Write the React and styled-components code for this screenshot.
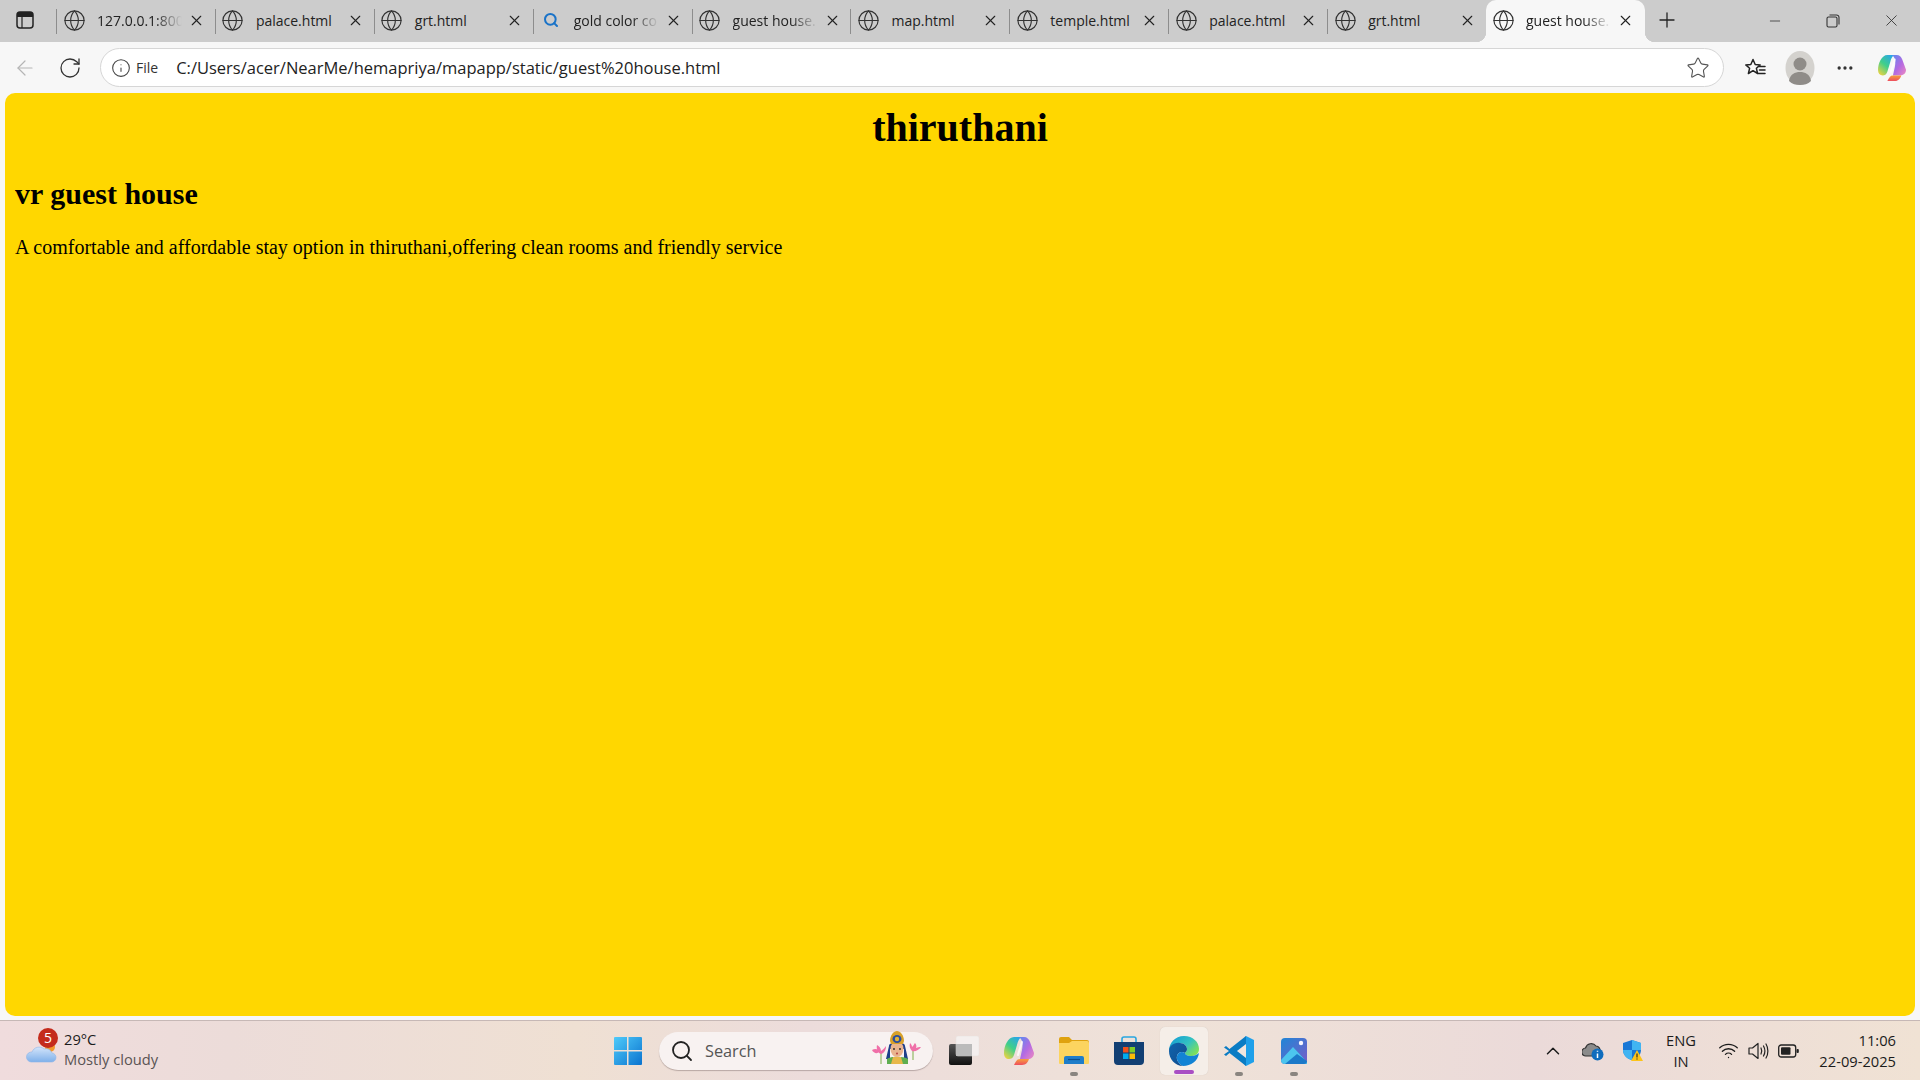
import React from "react";
import styled, { createGlobalStyle } from "styled-components";
import { Globe, X, Plus, Minus, RotateCw, ArrowLeft, Info, Star, MoreHorizontal, ChevronUp, Search, Wifi } from "lucide-react";

const Global = createGlobalStyle`
  html, body { margin: 0; padding: 0; background: #f7f7f7; }
  * { box-sizing: border-box; }
`;

const Screen = styled.div`
  width: 1920px;
  height: 1080px;
  display: flex;
  flex-direction: column;
  overflow: hidden;
  background: #f7f7f7;
  font-family: "Open Sans", "Noto Sans", sans-serif;
  color: #1b1b1b;
`;

const TabStrip = styled.div`
  height: 42px;
  flex: none;
  display: flex;
  background: #cccccc;
`;
const SideButton = styled.div`
  width: 56px;
  display: flex;
  align-items: center;
  padding: 0 0 2px 16px;
`;
const Tab = styled.div`
  position: relative;
  width: 158.9px;
  flex: none;
  display: flex;
  align-items: center;
  padding: 0 0 2px ${p => (p.$active ? "5.5px" : "6.5px")};
  background: ${p => (p.$active ? "#f7f7f7" : "transparent")};
  border-radius: ${p => (p.$active ? "10px 10px 0 0" : "0")};

  ${p =>
    !p.$active
      ? `&::before {
    content: "";
    position: absolute;
    left: 0;
    top: 9px;
    height: 25px;
    width: 1px;
    background: #8d8d8d;
  }`
      : ""}
  ${p =>
    p.$active
      ? `&::before, &::after {
    content: "";
    position: absolute;
    bottom: 0;
    width: 10px;
    height: 10px;
  }
  &::before {
    left: -10px;
    background: radial-gradient(circle at 0 0, transparent 10px, #f7f7f7 10.5px);
  }
  &::after {
    right: -10px;
    background: radial-gradient(circle at 100% 0, transparent 10px, #f7f7f7 10.5px);
  }`
      : ""}
`;
const TabIcon = styled.span`
  width: 23px;
  display: flex;
  justify-content: center;
`;
const TabLabel = styled.span`
  margin-left: 11.5px;
  width: 85px;
  font-size: 14px;
  white-space: nowrap;
  color: #222;
  ${p =>
    p.$fade
      ? `-webkit-mask-image: linear-gradient(90deg, #000 68%, transparent 100%);
  mask-image: linear-gradient(90deg, #000 68%, transparent 100%);`
      : ""}
`;
const TabClose = styled.span`
  margin-left: 6px;
  display: flex;
  color: #222;
`;
const NewTab = styled.div`
  margin-left: 10px;
  width: 24px;
  display: flex;
  align-items: center;
  justify-content: center;
  padding-bottom: 2px;
`;
const WindowButtons = styled.div`
  margin-left: auto;
  display: flex;
  align-items: center;
  padding-bottom: 1px;
`;
const WindowButton = styled.div`
  width: 58px;
  display: flex;
  justify-content: center;
  color: #333;
`;

const Toolbar = styled.div`
  height: 51px;
  flex: none;
  display: flex;
  align-items: center;
  background: #f7f7f7;
`;
const NavButton = styled.div`
  width: ${p => p.$w}px;
  flex: none;
  display: flex;
  justify-content: center;
  color: ${p => (p.$dim ? "#b5b5b5" : "#333")};
`;
const AddressBar = styled.div`
  width: 1624px;
  height: 39px;
  flex: none;
  margin-left: 10px;
  display: flex;
  align-items: center;
  padding: 0 13px 0 10px;
  background: #fff;
  border: 1.5px solid #d6d6d6;
  border-radius: 20px;
`;
const FileTag = styled.span`
  margin-left: 5px;
  font-size: 14px;
  color: #333;
`;
const Url = styled.span`
  margin-left: 18px;
  font-size: 16.5px;
  color: #222;
  white-space: nowrap;
`;
const BarStar = styled.span`
  margin-left: auto;
  display: flex;
  color: #555;
`;
const ToolIcons = styled.div`
  flex: none;
  display: flex;
  align-items: center;
  padding-left: 17px;
`;
const ToolSlot = styled.div`
  width: ${p => p.$w}px;
  flex: none;
  display: flex;
  justify-content: center;
  color: #333;
`;

const Page = styled.main`
  flex: 1;
  margin: 0 5px 4px;
  padding: 12px 10px 10px;
  background: #ffd700;
  border-radius: 10px;
  font-family: "Liberation Serif", "Times New Roman", serif;
  color: #000;
`;
const Title = styled.h1`
  margin: 0;
  font-size: 40px;
  line-height: 46px;
  text-align: center;
`;
const Name = styled.h2`
  margin: 26px 0 25px;
  font-size: 30px;
  line-height: 34px;
`;
const Text = styled.p`
  margin: 0;
  font-size: 20px;
  line-height: 23px;
`;

const Taskbar = styled.footer`
  height: 60px;
  flex: none;
  display: flex;
  align-items: center;
  border-top: 1px solid #c6b8b6;
  background: linear-gradient(90deg, #f0dcdd 0%, #ecdcd9 12%, #efe0d3 30%, #ecdcdb 42%, #efe2d8 62%, #ebdad9 80%, #f0e2d4 100%);
`;
const Weather = styled.div`
  position: relative;
  width: 604px;
  flex: none;
  display: flex;
  align-items: center;
  padding: 0 0 3px 25px;
`;
const Badge = styled.span`
  position: absolute;
  left: 38px;
  top: -1px;
  width: 20px;
  height: 20px;
  border-radius: 50%;
  background: #c42b1c;
  color: #fff;
  font-size: 14px;
  line-height: 20px;
  text-align: center;
`;
const WeatherText = styled.div`
  margin-left: 7px;
  display: flex;
  flex-direction: column;
  font-size: 14.7px;
  line-height: 20px;
  color: #1b1b1b;
`;
const Muted = styled.span`
  color: #5a5454;
`;
const AppSlot = styled.div`
  position: relative;
  width: 48px;
  height: 48px;
  flex: none;
  display: flex;
  align-items: center;
  justify-content: center;
  border-radius: 5px;
  background: ${p => (p.$active ? "#f5eee8" : "transparent")};
  box-shadow: ${p => (p.$active ? "0 0 1px rgba(0,0,0,.15)" : "none")};
`;
const Dot = styled.span`
  position: absolute;
  bottom: ${p => (p.$active ? "1px" : "-1px")};
  left: 50%;
  transform: translateX(-50%);
  width: ${p => (p.$active ? "20px" : "8px")};
  height: 4px;
  border-radius: 2px;
  background: ${p => (p.$active ? "#a94fc4" : "#8a8580")};
`;
const SearchBox = styled.div`
  width: 274px;
  height: 38px;
  margin: 0 7px;
  flex: none;
  display: flex;
  align-items: center;
  padding-left: 11px;
  border-radius: 19px;
  background: #f8f2f1;
  box-shadow: 0 1px 1px rgba(90, 70, 70, .35);
`;
const SearchText = styled.span`
  margin-left: 11px;
  font-size: 16.3px;
  color: #555;
`;
const Apps = styled.div`
  display: flex;
  gap: 7px;
`;
const Tray = styled.div`
  margin-left: auto;
  display: flex;
  align-items: center;
  padding-right: 24px;
`;
const TraySlot = styled.div`
  width: ${p => p.$w}px;
  display: flex;
  justify-content: center;
  color: #1b1b1b;
`;
const Lang = styled.div`
  width: 56px;
  margin-right: 4px;
  font-size: 14.7px;
  line-height: 21px;
  text-align: center;
`;
const Clock = styled.div`
  width: 93px;
  font-size: 14.7px;
  line-height: 21px;
  text-align: right;
`;
const Goddess = styled.svg`
  margin-left: auto;
  margin-right: 10px;
  margin-top: -5px;
  overflow: visible;
`;

const SidebarIcon = () => (
  <svg width="18" height="18" viewBox="0 0 18 18">
    <rect x="1" y="1" width="16" height="16" rx="3" fill="none" stroke="#222" strokeWidth="1.5" />
    <path d="M1 6V4a3 3 0 0 1 3-3h10a3 3 0 0 1 3 3v2z" fill="#222" />
    <path d="M6 6v11" stroke="#222" strokeWidth="1.2" />
  </svg>
);

const RestoreIcon = () => (
  <svg width="14" height="14" viewBox="0 0 14 14" fill="none" stroke="#333" strokeWidth="1.1">
    <rect x="1" y="3" width="10" height="10" rx="1.5" />
    <path d="M3.5 1h7A2.5 2.5 0 0 1 13 3.500v7" />
  </svg>
);

const FavIcon = () => (
  <svg width="22" height="22" viewBox="0 0 22 22" fill="none" stroke="#222" strokeWidth="1.5" strokeLinejoin="round">
    <path d="M9 2.500l2.200 5 5 .4-3.800 3.400 1.200 5.200L9 13.700l-4.600 2.800 1.200-5.200L1.800 7.900l5-.4z" />
    <path d="M15 9.500h6M15.500 13h5.500M14 16.500h7" strokeLinecap="round" />
  </svg>
);

const Avatar = () => (
  <svg width="30" height="34" viewBox="0 0 30 34">
    <ellipse cx="15" cy="17" rx="14.500" ry="17" fill="#d4d2ce" />
    <circle cx="15" cy="13" r="6.500" fill="#8f8c88" />
    <path d="M4 30c1-7 6-9 11-9s10 2 11 9c-3 3-7 4-11 4s-8-1-11-4z" fill="#8f8c88" />
  </svg>
);

const CopilotIcon = ({ size = 30, id = "cp" }) => (
  <svg width={size} height={size} viewBox="0 0 30 30">
    <defs>
      <linearGradient id={`${id}a`} x1="0.8" y1="0" x2="0.1" y2="1">
        <stop offset="0" stopColor="#2aa5ea" />
        <stop offset=".5" stopColor="#3fcf8a" />
        <stop offset="1" stopColor="#f4d33f" />
      </linearGradient>
      <linearGradient id={`${id}b`} x1="0" y1="0" x2="1" y2="1">
        <stop offset="0" stopColor="#5a8cf0" />
        <stop offset=".55" stopColor="#b46ae2" />
        <stop offset="1" stopColor="#ee8ac0" />
      </linearGradient>
      <linearGradient id={`${id}c`} x1="0" y1="0" x2="0" y2="1">
        <stop offset="0" stopColor="#f6a03c" />
        <stop offset="1" stopColor="#ee4d5f" />
      </linearGradient>
    </defs>
    <path d="M10 1h8c-3 1-4 4-5 8l-3 10c-1 3-3 4-5 4-3 0-5-2-5-6C0 10 4 1 10 1z" fill={`url(#${id}a)`} />
    <path d="M15 1h5c3 0 5 2 6 5l4 11c0 4-3 6-6 6h-8l2-9c1-5 1-10-3-13z" fill={`url(#${id}b)`} />
    <path d="M10 29h8c4 0 6-3 7-6H16c-3 0-4 2-6 6z" fill={`url(#${id}c)`} />
    <path d="M18 6c-1 4-3 9-4 13" stroke="#fff" strokeOpacity=".75" strokeWidth="2.2" strokeLinecap="round" fill="none" />
  </svg>
);

const WeatherIcon = () => (
  <svg width="32" height="28" viewBox="0 0 32 28">
    <defs>
      <linearGradient id="cl" x1="0" y1="0" x2="0" y2="1">
        <stop offset="0" stopColor="#d3e4fa" />
        <stop offset="1" stopColor="#7fb0ea" />
      </linearGradient>
    </defs>
    <circle cx="25" cy="12" r="5" fill="#f29a2e" />
    <path d="M6 27H26a4.500 4.500 0 0 0 1-9 7 7 0 0 0-8-4 7.500 7.500 0 0 0-12 3 5 5 0 0 0-1 10z" fill="url(#cl)" stroke="#8eb6e8" strokeWidth=".6" />
  </svg>
);

const WindowsLogo = () => (
  <svg width="30" height="30" viewBox="0 0 30 30">
    <defs>
      <linearGradient id="win" x1="0" y1="0" x2="1" y2="1">
        <stop offset="0" stopColor="#4fcbfa" />
        <stop offset="1" stopColor="#0a73cf" />
      </linearGradient>
    </defs>
    <path d="M1 2a1 1 0 0 1 1-1h12v13H1zM15.500 1H28a1 1 0 0 1 1 1v12H15.500zM1 15.500h13V29H2a1 1 0 0 1-1-1zM15.500 15.500H29V28a1 1 0 0 1-1 1H15.500z" fill="url(#win)" />
  </svg>
);

const LadyIcon = () => (
  <Goddess width="52" height="34" viewBox="0 0 52 34">
    <path d="M10 20v13M42 16v13" stroke="#7fae4a" strokeWidth="1" />
    <g fill="#f06fa8">
      <path d="M1 19c3-2 6-1 8 1-2 3-6 3-8-1z" />
      <path d="M6 14c2 1 4 3 4 6 3-2 4-4 5-5 0 3-1 7-5 8-3-1-5-5-4-9z" />
      <path d="M39 12c1 1 2 2 2 4 2-2 2-3 3-4 1 1 2 3 1 5 2-1 3-1 5-1-2 3-6 5-9 4-2-2-3-5-2-8z" />
    </g>
    <path d="M18 15c0-5 16-5 16 0l3 13h-4V18H19v10h-4z" fill="#1d3f8a" />
    <path d="M16 28c3-3 17-3 21 0v5H16z" fill="#5fae50" />
    <path d="M22 26h8l2 7H20z" fill="#e8b84a" />
    <ellipse cx="26" cy="18" rx="6.500" ry="8" fill="#e9b48f" />
    <path d="M19 10c0-6 4-10 7-10s7 4 7 10l-1 3H20z" fill="#d9a129" />
    <ellipse cx="26" cy="8" rx="4.500" ry="4" fill="#2b4ea0" />
    <circle cx="26" cy="8" r="2.200" fill="#e2b33b" />
    <circle cx="23" cy="18" r=".9" fill="#222" />
    <circle cx="29" cy="18" r=".9" fill="#222" />
    <circle cx="26" cy="22.500" r="1" fill="#b8433f" />
  </Goddess>
);

const TaskViewIcon = () => (
  <svg width="30" height="30" viewBox="0 0 30 30">
    <defs>
      <linearGradient id="tv" x1="0" y1="0" x2="0" y2="1">
        <stop offset="0" stopColor="#555" />
        <stop offset="1" stopColor="#111" />
      </linearGradient>
    </defs>
    <rect x="0" y="8" width="23" height="21" rx="2" fill="url(#tv)" />
    <rect x="7" y="0" width="23" height="20" rx="2" fill="#f4f2f1" fillOpacity=".85" stroke="#e4e0de" strokeWidth=".5" />
    <rect x="7" y="8" width="16" height="12" fill="#bbb" />
  </svg>
);

const FolderIcon = () => (
  <svg width="30" height="28" viewBox="0 0 30 28">
    <path d="M0 2a2 2 0 0 1 2-2h8l3 3h15a2 2 0 0 1 2 2v4H0z" fill="#dfa20f" />
    <path d="M0 6h10l3-2h15a2 2 0 0 1 2 2v20a1 1 0 0 1-1 1H1a1 1 0 0 1-1-1z" fill="#fcd45f" />
    <path d="M5 21a2 2 0 0 1 2-2h16a2 2 0 0 1 2 2v6H5z" fill="#1f7dc9" />
    <path d="M9 22.500h12" stroke="#0c4f8c" strokeWidth="1.2" />
  </svg>
);

const StoreIcon = () => (
  <svg width="30" height="30" viewBox="0 0 30 30">
    <path d="M8 6V3a2 2 0 0 1 2-2h10a2 2 0 0 1 2 2v3" fill="none" stroke="#2aa6e0" strokeWidth="1.6" />
    <path d="M0 6h30v19a4 4 0 0 1-4 4H4a4 4 0 0 1-4-4z" fill="#123f73" />
    <rect x="9" y="11" width="5.500" height="5.500" fill="#f1511b" />
    <rect x="15.500" y="11" width="5.500" height="5.500" fill="#80cc28" />
    <rect x="9" y="17.500" width="5.500" height="5.500" fill="#00adef" />
    <rect x="15.500" y="17.500" width="5.500" height="5.500" fill="#fbbc09" />
  </svg>
);

const EdgeIcon = () => (
  <svg width="30" height="30" viewBox="0 0 30 30">
    <defs>
      <linearGradient id="ed1" x1="0" y1="0" x2="1" y2=".7">
        <stop offset="0" stopColor="#0f97d8" />
        <stop offset=".6" stopColor="#34c3c0" />
        <stop offset="1" stopColor="#7de05a" />
      </linearGradient>
      <linearGradient id="ed2" x1="0" y1="0" x2="1" y2="1">
        <stop offset="0" stopColor="#0f64ad" />
        <stop offset="1" stopColor="#114a8b" />
      </linearGradient>
    </defs>
    <path d="M15 0c9 0 15 6 15 13 0 5-4 7-8 7-3 0-6-1-6-3 0-1 2-1 2-4 0-3-3-6-7-6C6 7 2 11 0 15 0 7 6 0 15 0z" fill="url(#ed1)" />
    <path d="M0 15c0-5 5-9 11-8 4 0 7 3 7 6 0 3-2 3-2 4-3-2-7-1-8 3-1 4 2 8 6 10C6 30 0 23 0 15z" fill="url(#ed2)" />
    <path d="M14 30c-4-2-7-6-6-10 1-4 5-5 8-3 0 2 3 3 6 3 3 0 6-1 8-3-1 8-8 13-16 13z" fill="#1283d4" />
  </svg>
);

const VSCodeIcon = () => (
  <svg width="30" height="30" viewBox="0 0 30 30">
    <path d="M22 0l8 4v22l-8 4-13-12.500z" fill="#1fa0ea" />
    <path d="M22 0v9L13 15l9 6v9L5.500 17 2 20 0 18.500 5 15 0 11.500 2 10l3.500 3z" fill="#0a7cc4" />
    <path d="M22 8v14l-9-7z" fill="#f1e6df" />
  </svg>
);

const PhotosIcon = () => (
  <svg width="26" height="26" viewBox="0 0 26 26">
    <defs>
      <linearGradient id="ph" x1="0" y1="0" x2="1" y2="1">
        <stop offset="0" stopColor="#1f86d6" />
        <stop offset="1" stopColor="#7a5cc8" />
      </linearGradient>
    </defs>
    <rect width="26" height="26" rx="4" fill="url(#ph)" />
    <circle cx="20" cy="5" r="2.200" fill="#f5f5ff" />
    <path d="M0 22l12-13 14 15v-1 3H4a4 4 0 0 1-4-4z" fill="#4cc5ee" />
    <path d="M4 26l12-10 10 7a3 3 0 0 1-3 3z" fill="#1c79c9" />
  </svg>
);

const OneDriveIcon = () => (
  <svg width="22" height="20" viewBox="0 0 22 20">
    <path d="M4 15a4 4 0 0 1-.5-8A6 6 0 0 1 14 5a4.500 4.500 0 0 1 4 5.500V15z" fill="#8b8b8b" stroke="#333" strokeWidth="1.2" />
    <circle cx="15.500" cy="13.500" r="6" fill="#0f6cbd" />
    <path d="M15.500 12.500v4.500M15.500 9.800v1" stroke="#fff" strokeWidth="1.5" />
  </svg>
);

const ShieldIcon = () => (
  <svg width="20" height="21" viewBox="0 0 20 21">
    <path d="M9 0l9 3v7c0 5-4 9-9 10-5-1-9-5-9-10V3z" fill="#1877d6" />
    <path d="M9 0l9 3v7H9zM0 10h9v10c-5-1-9-5-9-10z" fill="#41b4f2" />
    <path d="M14 10l6 11H8z" fill="#fcc419" />
    <path d="M14 13.500v4M14 18.500v1" stroke="#222" strokeWidth="1.1" />
  </svg>
);

const VolumeIcon = () => (
  <svg width="21" height="18" viewBox="0 0 21 18" fill="none" stroke="#222" strokeWidth="1.2" strokeLinejoin="round">
    <path d="M1 6h3.500L10 1.500v15L4.500 12H1z" />
    <path d="M13 6c1 2 1 4 0 6M15.500 4c1.700 3 1.700 7 0 10M18 2c2.500 4 2.500 10 0 14" strokeLinecap="round" />
  </svg>
);

const BatteryIcon = () => (
  <svg width="21" height="14" viewBox="0 0 21 14">
    <rect x=".7" y="1" width="17" height="12" rx="2.500" fill="none" stroke="#222" strokeWidth="1.3" />
    <rect x="3" y="3.200" width="9.500" height="7.600" rx="1" fill="#222" />
    <rect x="18.500" y="5" width="2.300" height="4" rx="1" fill="#222" />
  </svg>
);

const tabs = [
  { label: "127.0.0.1:800", fade: true },
  { label: "palace.html" },
  { label: "grt.html" },
  { label: "gold color co", fade: true, search: true },
  { label: "guest house.", fade: true },
  { label: "map.html" },
  { label: "temple.html" },
  { label: "palace.html" },
  { label: "grt.html" },
  { label: "guest house.", fade: true, active: true }
];

const apps = [
  { icon: <TaskViewIcon /> },
  { icon: <CopilotIcon id="bar" /> },
  { icon: <FolderIcon />, dot: true },
  { icon: <StoreIcon /> },
  { icon: <EdgeIcon />, active: true, dot: true },
  { icon: <VSCodeIcon />, dot: true },
  { icon: <PhotosIcon />, dot: true }
];

const App = () => (
  <Screen>
    <Global />
    <TabStrip>
      <SideButton>
        <SidebarIcon />
      </SideButton>
      {tabs.map((t, i) => (
        <Tab key={i} $active={t.active}>
          <TabIcon>
            {t.search ? (
              <Search size={16} color="#1a73c8" strokeWidth={3} />
            ) : (
              <Globe size={23} color="#333" strokeWidth={1.2} />
            )}
          </TabIcon>
          <TabLabel $fade={t.fade}>{t.label}</TabLabel>
          <TabClose>
            <X size={17} strokeWidth={1.6} />
          </TabClose>
        </Tab>
      ))}
      <NewTab>
        <Plus size={24} strokeWidth={1.3} color="#222" />
      </NewTab>
      <WindowButtons>
        <WindowButton>
          <Minus size={16} strokeWidth={1.2} />
        </WindowButton>
        <WindowButton>
          <RestoreIcon />
        </WindowButton>
        <WindowButton>
          <X size={19} strokeWidth={1.1} />
        </WindowButton>
      </WindowButtons>
    </TabStrip>

    <Toolbar>
      <NavButton $w={50} $dim>
        <ArrowLeft size={24} strokeWidth={1.2} />
      </NavButton>
      <NavButton $w={40}>
        <RotateCw size={24} strokeWidth={1.3} />
      </NavButton>
      <AddressBar>
        <Info size={20} strokeWidth={1.3} color="#444" />
        <FileTag>File</FileTag>
        <Url>C:/Users/acer/NearMe/hemapriya/mapapp/static/guest%20house.html</Url>
        <BarStar>
          <Star size={24} strokeWidth={1.1} />
        </BarStar>
      </AddressBar>
      <ToolIcons>
        <ToolSlot $w={28}>
          <FavIcon />
        </ToolSlot>
        <ToolSlot $w={62}>
          <Avatar />
        </ToolSlot>
        <ToolSlot $w={28}>
          <MoreHorizontal size={20} strokeWidth={2} />
        </ToolSlot>
        <ToolSlot $w={66}>
          <CopilotIcon size={28} id="top" />
        </ToolSlot>
      </ToolIcons>
    </Toolbar>

    <Page>
      <Title>thiruthani</Title>
      <Name>vr guest house</Name>
      <Text>A comfortable and affordable stay option in thiruthani,offering clean rooms and friendly service</Text>
    </Page>

    <Taskbar>
      <Weather>
        <WeatherIcon />
        <Badge>5</Badge>
        <WeatherText>
          <span>29°C</span>
          <Muted>Mostly cloudy</Muted>
        </WeatherText>
      </Weather>
      <AppSlot>
        <WindowsLogo />
      </AppSlot>
      <SearchBox>
        <Search size={24} strokeWidth={1.8} color="#222" />
        <SearchText>Search</SearchText>
        <LadyIcon />
      </SearchBox>
      <Apps>
        {apps.map((a, i) => (
          <AppSlot key={i} $active={a.active}>
            {a.icon}
            {a.dot && <Dot $active={a.active} />}
          </AppSlot>
        ))}
      </Apps>
      <Tray>
        <TraySlot $w={40}>
          <ChevronUp size={22} strokeWidth={1.6} />
        </TraySlot>
        <TraySlot $w={40}>
          <OneDriveIcon />
        </TraySlot>
        <TraySlot $w={40}>
          <ShieldIcon />
        </TraySlot>
        <Lang>
          ENG
          <br />
          IN
        </Lang>
        <TraySlot $w={30}>
          <Wifi size={21} strokeWidth={1.5} />
        </TraySlot>
        <TraySlot $w={30}>
          <VolumeIcon />
        </TraySlot>
        <TraySlot $w={30}>
          <BatteryIcon />
        </TraySlot>
        <Clock>
          11:06
          <br />
          22-09-2025
        </Clock>
      </Tray>
    </Taskbar>
  </Screen>
);

export default App;
